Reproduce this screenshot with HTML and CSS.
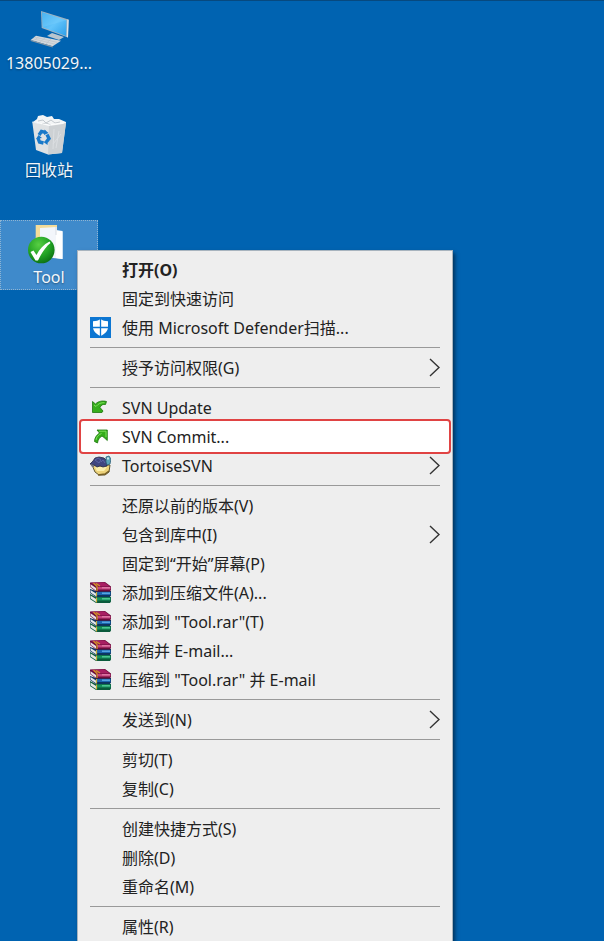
FILE: index.html
```
<!DOCTYPE html>
<html lang="zh-CN">
<head>
    <meta charset="UTF-8">
    <meta name="viewport" content="width=device-width, initial-scale=1.0">
    <title>Desktop</title>
    <link rel="stylesheet" href="styles.css">
</head>
<body>
    <svg class="sprites" aria-hidden="true">
        <symbol id="arrow" viewBox="0 0 11 19">
            <path d="M1 1l9 8.500-9 8.500" fill="none" stroke="#333" stroke-width="1.400"/>
        </symbol>
        <symbol id="rar" viewBox="0 0 21 21">
            <!-- bottom book -->
            <path d="M0 12l6 3h15v4.500L20 21H6l-6-4z" fill="#0a5a3c"/>
            <path d="M.500 13.500L6 17v3L.500 16.500z" fill="#e4e8e6"/>
            <path d="M7 15.500h13.500v3H7z" fill="#14915c"/>
            <path d="M12 16h8v1.500h-8z" fill="#4cc592"/>
            <path d="M6.500 15.500v5" stroke="#c9b33c" stroke-width="1.200"/>
            <!-- middle book -->
            <path d="M0 7l6 2h15v4.500l-1 1.500H6l-6-4z" fill="#0d355f"/>
            <path d="M.500 8L6 11.500v2.700L.500 10.500z" fill="#e3e7ec"/>
            <path d="M7 10h13.500v3H7z" fill="#1c66b0"/>
            <path d="M12 10.500h8V12h-8z" fill="#55a5df"/>
            <path d="M6.500 10v4.500" stroke="#c9b33c" stroke-width="1.200"/>
            <!-- top book -->
            <path d="M0 .500L15 0l6 4.500V8l-1 1.500H6L0 5z" fill="#6b0c3c"/>
            <path d="M1 .800l13.500-.300L20 4.500H7z" fill="#a81f63"/>
            <path d="M.500 2.200L6 6v2.700L.500 4.800z" fill="#e9dfe4"/>
            <path d="M7 5h13.500v2.500H7z" fill="#c5427f"/>
            <path d="M12 5.300h8v1h-8z" fill="#e38bb1"/>
            <path d="M3.500 1l3.500 3.500V9M6 1.500l4 2.500" fill="none" stroke="#d09a1e" stroke-width="1.200"/>
        </symbol>
    </svg>

    <main class="desktop">
        <button class="shortcut">
            <svg class="shortcut-icon" viewBox="0 0 48 40" aria-hidden="true">
                <defs>
                    <linearGradient id="screen" x1="0" y1="0" x2="1" y2="1">
                        <stop offset="0" stop-color="#2fa4ea"/>
                        <stop offset=".5" stop-color="#63c4fb"/>
                        <stop offset="1" stop-color="#2d9fe8"/>
                    </linearGradient>
                </defs>
                <path d="M22 25l5-3 12 4-5 3z" fill="#b9c5ce"/>
                <path d="M16 0l27.500 8.500-.500 18L16.700 17z" fill="#9fb3c1"/>
                <path d="M17 1.300l24.500 7.900-.300 15.800L17.600 16.300z" fill="url(#screen)"/>
                <path d="M17 1.300l24.500 7.900L18 16z" fill="#7dd0fc" opacity=".35"/>
                <path d="M42.300 8.500l1.400.300-.700 17.700-1.300-.600z" fill="#dfe6ea"/>
                <path d="M11 24.700l25 5-8.300 5.600L5.700 29z" fill="#d3d8dc"/>
                <path d="M5.700 29l22 6.300v1.200L5.700 30z" fill="#8e9aa4"/>
                <path d="M9.500 26.200l23 5.200M8 27.700l22 5.500M14 25.500l-5 4M20 27l-5 4M26 28.200l-5 4.500" stroke="#b9c0c6" stroke-width=".6"/>
            </svg>
            <span class="shortcut-label">13805029...</span>
        </button>
        <button class="shortcut">
            <svg class="shortcut-icon" viewBox="0 0 48 40" aria-hidden="true">
                <path d="M7.300 4L24 7l17-2.500L37 35l-14 1.500L11 32z" fill="#dfe2e4"/>
                <path d="M24 7l17-2.500L37 35l-14 1.500z" fill="#cdd1d4"/>
                <path d="M8 4l4-3 1-3 5-1 4 2 5-1 2 3 5 0 7 3-3 2-14 2z" fill="#f3f5f6"/>
                <path d="M13 3l5-1 3 3 5-3 4 3 5-1M17 6l4-1 5 2" stroke="#c3c9ce" fill="none"/>
                <path d="M29 11l-1 20M34 13l-3 17M28 26l8-10" stroke="#dcdfe2" fill="none"/>
                <path d="M7.300 4L24 7l17-2.500" stroke="#fff" stroke-width=".8" fill="none"/>
                <g stroke="#1979c9" stroke-width="3.400" fill="none">
                    <path d="M14 17l2.500-3.500 4 .800"/>
                    <path d="M22 16.500l2 4-2.500 3.200"/>
                    <path d="M18.500 25l-4-1-1.500-4"/>
                </g>
                <path d="M19.500 11.500l4 3.500-4.500 2zM23 21.500l-4.500 2.500 4 3zM11 21l2.500-4 3.500 3z" fill="#1979c9"/>
            </svg>
            <span class="shortcut-label">回收站</span>
        </button>
        <button class="shortcut selected">
            <svg class="shortcut-icon" viewBox="0 0 48 40" aria-hidden="true">
                <defs>
                    <radialGradient id="badge" cx=".4" cy=".3" r=".75">
                        <stop offset="0" stop-color="#58cf43"/>
                        <stop offset=".6" stop-color="#20a023"/>
                        <stop offset="1" stop-color="#0b6d12"/>
                    </radialGradient>
                </defs>
                <path d="M10.700 0H32v30H10.700z" fill="#f4dc9a"/>
                <path d="M15 3l17-1v4l5.500.500V34L28 33l-13-3z" fill="#f3f6fb"/>
                <path d="M31 5l6.500 1V34l-6.500-1z" fill="#fff"/>
                <path d="M31 2v8" stroke="#d7dbe0"/>
                <circle cx="16.300" cy="25" r="13.300" fill="url(#badge)"/>
                <path d="M5.500 27l3-1.500 3 4.500c3-6 7-10.500 13-13.500l1 1.500c-5 4-9 10-12.500 17.500h-2.500z" fill="#fff"/>
            </svg>
            <span class="shortcut-label">Tool</span>
        </button>
    </main>

    <div class="menu" role="menu">
        <button class="item default" role="menuitem"><span class="text">打开(O)</span></button>
        <button class="item" role="menuitem"><span class="text">固定到快速访问</span></button>
        <button class="item" role="menuitem">
            <svg class="icon" viewBox="0 0 21 21" aria-hidden="true">
                <path d="M0 0h21v21H0z" fill="#0c76d2"/>
                <path d="M10.500 2C8.500 3.500 6 4.200 3 4.300V10c0 4 3 7 7.500 9 4.500-2 7.500-5 7.500-9V4.300c-3-.100-5.500-.800-7.500-2.300z" fill="#fff"/>
                <path d="M10.500 2v17M3 10.500h15" stroke="#0c76d2" stroke-width="1.300"/>
            </svg>
            <span class="text">使用 Microsoft Defender扫描...</span>
        </button>
        <hr class="separator">
        <button class="item" role="menuitem" aria-haspopup="true">
            <span class="text">授予访问权限(G)</span>
            <svg class="arrow" aria-hidden="true"><use href="#arrow"/></svg>
        </button>
        <hr class="separator">
        <button class="item" role="menuitem">
            <svg class="icon" viewBox="0 0 21 21" aria-hidden="true">
                <path d="M2.500 4.500l3 2.500c3-3 7-3.500 11-2.500l-1 3c-2.500-.500-4.500.500-5.500 3l3 3.500-1 1.500H2.500z" fill="#35ad1b" stroke="#1c760c" stroke-width=".8"/>
                <path d="M4 8l2 1.500C8.500 6.500 11 5.500 14.500 5.700" stroke="#7ee05a" fill="none"/>
            </svg>
            <span class="text">SVN Update</span>
        </button>
        <button class="item highlighted" role="menuitem">
            <svg class="icon" viewBox="0 0 21 21" aria-hidden="true">
                <path d="M7 4h10.300v10.500L14 11.500l-2-1.500c-2.500 1.500-4 3.500-4.500 7L4.500 15.500C4.500 12 6.500 9 9.500 7z" fill="#35ad1b" stroke="#1c760c" stroke-width=".8"/>
                <path d="M9 5.200h7v6" stroke="#7ee05a" fill="none"/>
                <path d="M6 14c.500-3 2-5 5.500-6.500" stroke="#7ee05a" fill="none"/>
            </svg>
            <span class="text">SVN Commit...</span>
        </button>
        <button class="item" role="menuitem" aria-haspopup="true">
            <svg class="icon" viewBox="0 0 21 21" aria-hidden="true">
                <path d="M2 10l3 7 4 3h6l4-3 1-7z" fill="#ecd27a" stroke="#5f5730"/>
                <path d="M5 12l2 4h7l3-4z" fill="#fbf0ae"/>
                <path d="M0 9l3-3 2-3 4-1 5 1 3 3v5l-4 1-3-1-3 1-3-2z" fill="#3f4680" stroke="#232745" stroke-width=".8"/>
                <path d="M5 5l3-2 3 2-2 3zM11 7l2-2 2 3" fill="none" stroke="#5b65a5"/>
                <path d="M0 9l2 3h2v-2z" fill="#6f7182"/>
                <path d="M16 2l3-1 2 3-1 5-3 1-1-3z" fill="#5aa5b7" stroke="#2d6078" stroke-width=".8"/>
                <path d="M18 2.500v2" stroke="#e7fbff" stroke-width="1.500"/>
                <path d="M8 20l7-1 4-3" stroke="#765e26" stroke-width="1.500" fill="none"/>
            </svg>
            <span class="text">TortoiseSVN</span>
            <svg class="arrow" aria-hidden="true"><use href="#arrow"/></svg>
        </button>
        <hr class="separator">
        <button class="item" role="menuitem"><span class="text">还原以前的版本(V)</span></button>
        <button class="item" role="menuitem" aria-haspopup="true">
            <span class="text">包含到库中(I)</span>
            <svg class="arrow" aria-hidden="true"><use href="#arrow"/></svg>
        </button>
        <button class="item" role="menuitem"><span class="text">固定到“开始”屏幕(P)</span></button>
        <button class="item" role="menuitem">
            <svg class="icon" aria-hidden="true"><use href="#rar"/></svg>
            <span class="text">添加到压缩文件(A)...</span>
        </button>
        <button class="item" role="menuitem">
            <svg class="icon" aria-hidden="true"><use href="#rar"/></svg>
            <span class="text">添加到 "Tool.rar"(T)</span>
        </button>
        <button class="item" role="menuitem">
            <svg class="icon" aria-hidden="true"><use href="#rar"/></svg>
            <span class="text">压缩并 E-mail...</span>
        </button>
        <button class="item" role="menuitem">
            <svg class="icon" aria-hidden="true"><use href="#rar"/></svg>
            <span class="text">压缩到 "Tool.rar" 并 E-mail</span>
        </button>
        <hr class="separator">
        <button class="item" role="menuitem" aria-haspopup="true">
            <span class="text">发送到(N)</span>
            <svg class="arrow" aria-hidden="true"><use href="#arrow"/></svg>
        </button>
        <hr class="separator">
        <button class="item" role="menuitem"><span class="text">剪切(T)</span></button>
        <button class="item" role="menuitem"><span class="text">复制(C)</span></button>
        <hr class="separator">
        <button class="item" role="menuitem"><span class="text">创建快捷方式(S)</span></button>
        <button class="item" role="menuitem"><span class="text">删除(D)</span></button>
        <button class="item" role="menuitem"><span class="text">重命名(M)</span></button>
        <hr class="separator">
        <button class="item" role="menuitem"><span class="text">属性(R)</span></button>
    </div>
</body>
</html>
```
FILE: styles.css
```
* {
    box-sizing: border-box;
}

body {
    margin: 0;
    height: 100vh;
    overflow: hidden;
    position: relative;
    background-color: #0063b1;
    border-top: 1px solid #07497f;
    font-family: "Noto Sans", "Noto Sans CJK SC", sans-serif;
    font-size: 16px;
}

button {
    font: inherit;
    color: inherit;
    background: none;
    border: none;
    padding: 0;
}

.sprites {
    display: none;
}

/* Desktop icons */
.desktop {
    display: flex;
    flex-direction: column;
    align-items: flex-start;
    gap: 37px;
    padding-top: 5px;
    color: #f2f7fc;
}

.shortcut {
    display: flex;
    flex-direction: column;
    align-items: center;
    width: 98px;
    padding-top: 4px;
    border: 1px dotted transparent;
}

.shortcut.selected {
    background-color: #3f8acb;
    border-color: #8fb4d3;
}

.shortcut-icon {
    width: 48px;
    height: 40px;
    overflow: visible;
}

.shortcut-label {
    line-height: 24px;
    text-shadow: 0 1px 2px rgba(0, 0, 0, 0.4);
}

/* Context menu */
.menu {
    position: absolute;
    top: 249px;
    left: 77px;
    min-width: 376px;
    padding: 4px 0;
    display: flex;
    flex-direction: column;
    background-color: #eee;
    border: 1px solid #a8b4be;
    box-shadow: 2px 3px 4px rgba(0, 0, 0, 0.5);
    color: #222;
}

.item {
    display: grid;
    grid-template-columns: 21px 1fr 11px;
    column-gap: 11px;
    align-items: center;
    height: 29px;
    padding: 0 12px;
    text-align: left;
    white-space: nowrap;
}

.item.default {
    font-weight: bold;
}

.text {
    grid-column: 2;
    line-height: 24px;
}

.icon {
    grid-column: 1;
    width: 21px;
    height: 21px;
}

.arrow {
    grid-column: 3;
    width: 11px;
    height: 19px;
}

.separator {
    width: auto;
    height: 1px;
    margin: 5px 12px;
    border: none;
    background-color: #999;
}

.item.highlighted {
    position: relative;
    z-index: 0;
}

.item.highlighted::before {
    content: "";
    position: absolute;
    inset: -3px 1px;
    z-index: -1;
    background-color: #fff;
    border: 2px solid #e04343;
    border-radius: 4px;
}
```
